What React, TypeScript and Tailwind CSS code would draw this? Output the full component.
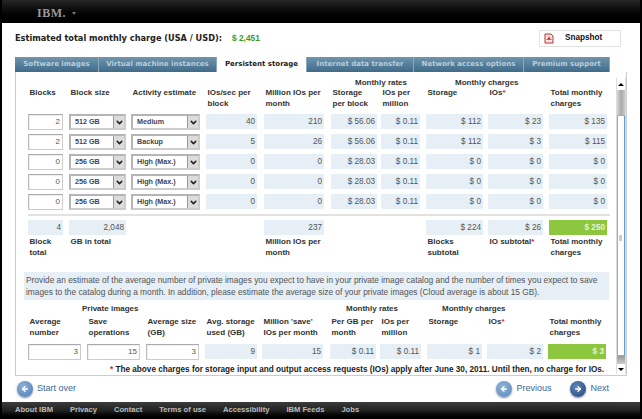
import { ArrowLeft, ArrowRight, ChevronDown } from 'lucide-react';
import type { ReactNode } from 'react';

const TABS = [
  { label: 'Software images', width: 'w-[84px]' },
  { label: 'Virtual machine instances', width: 'w-[118px]' },
  { label: 'Persistent storage', width: 'w-[90px]', active: true },
  { label: 'Internet data transfer', width: 'w-[107px]' },
  { label: 'Network access options', width: 'w-[110px]' },
  { label: 'Premium support', width: 'w-[86px]' },
];

const GRID_A = 'grid grid-cols-[41px_62px_75px_58px_67px_50px_45px_62px_61px_58px]';
const WIDTH_A = ['w-[35px]', 'w-[57px]', 'w-[69px]', 'w-[51px]', 'w-[60px]', 'w-[46px]', 'w-[39px]', 'w-[57px]', 'w-[55px]', 'w-[58px]'];
const GRID_B = 'grid grid-cols-[59px_59px_59px_57px_68px_50px_47px_60px_61px_58px]';
const WIDTH_B = ['w-[53px]', 'w-[53px]', 'w-[53px]', 'w-[52px]', 'w-[61px]', 'w-[46px]', 'w-[41px]', 'w-[55px]', 'w-[56px]', 'w-[58px]'];

const ROWS = [
  ['2', '512 GB', 'Medium', '40', '210', '$ 56.06', '$ 0.11', '$ 112', '$ 23', '$ 135'],
  ['2', '512 GB', 'Backup', '5', '26', '$ 56.06', '$ 0.11', '$ 112', '$ 3', '$ 115'],
  ['0', '256 GB', 'High (Max.)', '0', '0', '$ 28.03', '$ 0.11', '$ 0', '$ 0', '$ 0'],
  ['0', '256 GB', 'High (Max.)', '0', '0', '$ 28.03', '$ 0.11', '$ 0', '$ 0', '$ 0'],
  ['0', '256 GB', 'High (Max.)', '0', '0', '$ 28.03', '$ 0.11', '$ 0', '$ 0', '$ 0'],
];

const FOOTER = ['About IBM', 'Privacy', 'Contact', 'Terms of use', 'Accessibility', 'IBM Feeds', 'Jobs'];

function Star() {
  return <span className="text-[#e0202a]">*</span>;
}

function Head({ children }: { children: ReactNode }) {
  return <div className="pl-[1.5px] text-[8px] leading-[11px] font-bold whitespace-nowrap text-[#333]">{children}</div>;
}

function Value({ children, width, green }: { children: ReactNode; width: string; green?: boolean }) {
  return (
    <div className={`${width} h-[15px] pr-[2px] text-right text-[8.2px] leading-[15px] ${green ? 'bg-[#8dc63f] font-bold text-[#e8f5d0]' : 'bg-[#e6eef6] text-[#555]'}`}>
      {children}
    </div>
  );
}

function NumberBox({ value, width }: { value: string; width: string }) {
  return (
    <div className={`${width} h-[16px] border border-[#ccc] border-t-[#aaa] border-l-[#bbb] bg-white pr-[2px] text-right text-[8px] leading-[14px] text-[#555] shadow-[inset_1px_1px_0_#eee]`}>
      {value}
    </div>
  );
}

function Dropdown({ value, width }: { value: string; width: string }) {
  return (
    <div className={`${width} flex h-[16px] border-2 border-[#b5b5b5] border-r-[#ccc] border-b-[#ccc] bg-white`}>
      <div className="flex-1 pl-[4px] text-[7.2px] leading-[12px] font-bold text-[#445]">{value}</div>
      <div className="flex w-[11px] items-center justify-center border-l border-[#999] bg-[#dcdcdc]">
        <ChevronDown size={9} strokeWidth={4} className="text-[#222]" />
      </div>
    </div>
  );
}

function RoundButton({ dir, tone, children }: { dir: 'left' | 'right'; tone: string; children: ReactNode }) {
  const Icon = dir === 'left' ? ArrowLeft : ArrowRight;
  return (
    <div className="flex items-center gap-[4px]">
      <div className={`flex h-[16px] w-[16px] items-center justify-center rounded-full shadow-[0_1px_2px_#889] ${tone}`}>
        <Icon size={8} strokeWidth={4} className="text-white" />
      </div>
      <span className="text-[9px] text-[#3b6496]">{children}</span>
    </div>
  );
}

function Scrollbar() {
  return (
    <div className="mt-[6px] flex h-[296px] w-[10px] flex-col border-x border-[#ddd]">
      <div className="flex h-[12px] items-center justify-center bg-white">
        <div className="h-0 w-0 border-x-[3px] border-b-[3px] border-x-transparent border-b-black" />
      </div>
      <div className="h-[25px] bg-gradient-to-r from-[#d8d8d8] via-[#aaa] to-[#c8c8c8]" />
      <div className="relative flex-1 rounded-[1px] border border-[#7fb2e6] border-r-[#5d9ade] bg-white">
        <div className="absolute top-[119px] left-[1px] h-[6px] w-[3px] bg-[#ccc]" />
      </div>
      <div className="h-[8px] bg-gradient-to-b from-[#999] to-[#ccc]" />
      <div className="flex h-[10px] items-center justify-center bg-white">
        <div className="h-0 w-0 border-x-[3px] border-t-[3px] border-x-transparent border-t-black" />
      </div>
    </div>
  );
}

export default function App() {
  return (
    <div className="flex h-[419px] w-[642px] flex-col overflow-hidden border-x-2 border-black bg-white font-['Liberation_Sans',Arial,sans-serif]">
      {/* top bar */}
      <div className="flex h-[23px] items-center bg-gradient-to-b from-[#262626] to-black pt-[2px] pl-[35px]">
        <span className="font-['Liberation_Serif',serif] text-[12px] font-bold tracking-[0.5px] text-[#9a9a9a]">IBM.</span>
        <div className="mt-[1px] ml-[6px] h-0 w-0 border-x-[2.5px] border-t-[3px] border-x-transparent border-t-[#777]" />
      </div>

      {/* summary */}
      <div className="flex h-[34px] items-start justify-between pt-[7px] pr-[19px] pl-[13px]">
        <div className="flex h-[17px] items-center">
          <span className="font-['DejaVu_Sans',sans-serif] text-[8.2px] font-bold text-[#222]">Estimated total monthly charge (USA / USD):</span>
          <span className="ml-[10px] text-[8.4px] font-bold text-[#3b9b1f]">$ 2,451</span>
        </div>
        <div className="flex h-[17px] w-[82px] items-center border border-[#e2e2e2] bg-white pl-[3px]">
          <svg width="10" height="11" viewBox="0 0 10 11" className="ml-[1px]">
            <path d="M1 1h6l2 2v7H1z" fill="#f4e4e4" stroke="#b33" strokeWidth="1" />
            <path d="M2 7c2-1 3-3 3-5 0 2 1 4 3 5-2-.5-4-.5-6 0z" fill="#c22" />
          </svg>
          <span className="ml-[11px] text-[8.2px] font-bold text-[#111]">Snapshot</span>
        </div>
      </div>

      {/* tabs */}
      <div className="ml-[13px] flex h-[15px] items-stretch">
        {TABS.map((tab) => (
          <div
            key={tab.label}
            className={`${tab.width} flex items-center justify-center border-r border-[#8aa7bc] font-['DejaVu_Sans',sans-serif] text-[7px] font-bold ${tab.active ? 'bg-white text-[#222]' : 'bg-gradient-to-b from-[#6f95ae] to-[#3f6b8a] text-[#b9cdda]'}`}
          >
            {tab.label}
          </div>
        ))}
      </div>

      {/* panel */}
      <div className="ml-[13px] flex h-[304px] w-[612px] border border-t-0 border-[#ccc]">
        <div className="w-[600px] pt-[6px] pl-[12px]">
          <div className={`${GRID_A} h-[9px] text-[8px] leading-[9px] font-bold text-[#333]`}>
            <div className="col-span-2 col-start-6 pl-[24px]">Monthly rates</div>
            <div className="col-span-2 col-start-8 pl-[29px] whitespace-nowrap">Monthly charges</div>
          </div>
          <div className={`${GRID_A} h-[27px]`}>
            <Head>Blocks</Head>
            <Head>Block size</Head>
            <Head>Activity estimate</Head>
            <Head>IOs/sec per<br />block</Head>
            <Head>Million IOs per<br />month</Head>
            <Head>Storage<br />per block</Head>
            <Head>IOs per<br />million</Head>
            <Head>Storage</Head>
            <Head>IOs<Star /></Head>
            <Head>Total monthly<br />charges</Head>
          </div>

          <div className="flex flex-col gap-[4px]">
            {ROWS.map((row, i) => (
              <div key={i} className={GRID_A}>
                <NumberBox value={row[0]} width={WIDTH_A[0]} />
                <Dropdown value={row[1]} width={WIDTH_A[1]} />
                <Dropdown value={row[2]} width={WIDTH_A[2]} />
                {row.slice(3).map((v, j) => (
                  <Value key={j} width={WIDTH_A[j + 3]}>{v}</Value>
                ))}
              </div>
            ))}
          </div>

          <div className="mt-[4px] h-[2px] w-[582px] bg-[#e2e2e2]" />

          <div className={`${GRID_A} mt-[4px]`}>
            <Value width={WIDTH_A[0]}>4</Value>
            <Value width={WIDTH_A[1]}>2,048</Value>
            <div className="col-start-5"><Value width={WIDTH_A[4]}>237</Value></div>
            <div className="col-start-8"><Value width={WIDTH_A[7]}>$ 224</Value></div>
            <Value width={WIDTH_A[8]}>$ 26</Value>
            <Value width={WIDTH_A[9]} green>$ 250</Value>
          </div>
          <div className={`${GRID_A} mt-[1px] h-[22px]`}>
            <Head>Block<br />total</Head>
            <Head>GB in total</Head>
            <div className="col-start-5"><Head>Million IOs per<br />month</Head></div>
            <div className="col-start-8"><Head>Blocks<br />subtotal</Head></div>
            <Head>IO subtotal<Star /></Head>
            <Head>Total monthly<br />charges</Head>
          </div>

          <div className="mt-[14px] -ml-[4px] h-[28px] w-[585px] bg-[#e6eef6] px-[2px] py-[2px] text-[8.35px] leading-[12px] whitespace-nowrap text-[#555]">
            Provide an estimate of the average number of private images you expect to have in your private image catalog and the number of times you expect to save<br />
            images to the catalog during a month. In addition, please estimate the average size of your private images (Cloud average is about 15 GB).
          </div>

          <div className={`${GRID_B} mt-[4px] h-[12px] text-[8px] leading-[10px] font-bold text-[#333]`}>
            <div className="col-span-2 pl-[54px] whitespace-nowrap">Private images</div>
            <div className="col-span-2 col-start-6 pl-[16px] whitespace-nowrap">Monthly rates</div>
            <div className="col-span-2 col-start-8 pl-[15px] whitespace-nowrap">Monthly charges</div>
          </div>
          <div className={`${GRID_B} h-[28px]`}>
            <Head>Average<br />number</Head>
            <Head>Save<br />operations</Head>
            <Head>Average size<br />(GB)</Head>
            <Head>Avg. storage<br />used (GB)</Head>
            <Head>Million 'save'<br />IOs per month</Head>
            <Head>Per GB per<br />month</Head>
            <Head>IOs per<br />million</Head>
            <Head>Storage</Head>
            <Head>IOs<Star /></Head>
            <Head>Total monthly<br />charges</Head>
          </div>
          <div className={GRID_B}>
            <NumberBox value="3" width={WIDTH_B[0]} />
            <NumberBox value="15" width={WIDTH_B[1]} />
            <NumberBox value="3" width={WIDTH_B[2]} />
            {['9', '15', '$ 0.11', '$ 0.11', '$ 1', '$ 2'].map((v, j) => (
              <Value key={j} width={WIDTH_B[j + 3]}>{v}</Value>
            ))}
            <Value width={WIDTH_B[9]} green>$ 3</Value>
          </div>
          <div className="mt-[4px] pl-[82px] text-[8.2px] leading-[11px] font-bold whitespace-nowrap text-[#222]">
            <Star /> The above charges for storage input and output access requests (IOs) apply after June 30, 2011. Until then, no charge for IOs.
          </div>
        </div>
        <Scrollbar />
      </div>

      {/* navigation */}
      <div className="flex h-[26px] items-center justify-between pr-[31px] pl-[15px]">
        <RoundButton dir="left" tone="bg-[radial-gradient(circle_at_40%_35%,#8fb3dc,#4a78b0)]">Start over</RoundButton>
        <div className="flex items-center gap-[19px]">
          <RoundButton dir="left" tone="bg-[radial-gradient(circle_at_40%_35%,#8fb3dc,#5a86b8)]">Previous</RoundButton>
          <RoundButton dir="right" tone="bg-[radial-gradient(circle_at_40%_35%,#5f86b8,#1f4478)]">Next</RoundButton>
        </div>
      </div>

      {/* footer */}
      <div className="flex flex-1 items-center gap-[17px] bg-gradient-to-b from-[#3c3c3c] via-[#222] to-black pb-[1px] pl-[13px]">
        {FOOTER.map((item) => (
          <span key={item} className="text-[7.6px] font-bold text-[#bbb]">{item}</span>
        ))}
      </div>
    </div>
  );
}
